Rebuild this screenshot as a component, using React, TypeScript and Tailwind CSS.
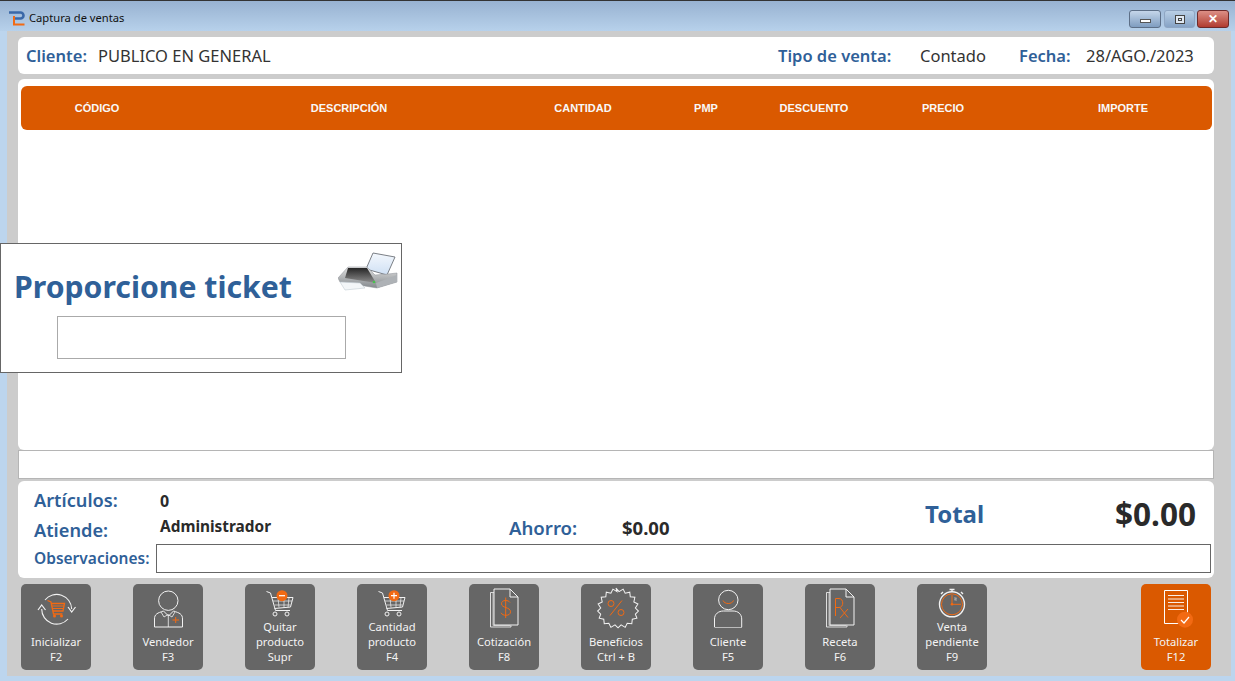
import React from "react";

const W = "#f2f2f2";
const O = "#f26a13";

const Cart = ({ plus }: { plus: boolean }) => (
  <g fill="none">
    <path d="M21.500 7.500l4 1.500 5 17.500h14.500M27 13.500H48l-2.500 9.500-16 1.500" stroke={W} strokeWidth="1" />
    <path d="M28 17h19M29.500 21h16M33 13.500l1 10M39 13.500v10M44 13.500l-1 10" stroke={W} strokeWidth=".7" />
    <circle cx="30" cy="30" r="2" stroke={W} />
    <circle cx="42" cy="30" r="2" stroke={W} />
    <circle cx="37" cy="11.700" r="5.500" fill={O} />
    <path d={plus ? "M34 11.700h6M37 8.700v6" : "M34 11.700h6"} stroke="#fff" strokeWidth="1.200" />
  </g>
);

const Doc = ({ children }: { children: React.ReactNode }) => (
  <g fill="none">
    <path d="M25 8.500H21.500V43H42V41.500" stroke={W} strokeWidth="1" opacity=".85" />
    <path d="M24 8.500V41.500H41.500" stroke="#bbb" strokeWidth="1" />
    <path d="M25 5H41L49 13V41H25Z M41 5V13H49" stroke={W} strokeWidth="1" />
    {children}
  </g>
);

const icons: Record<string, React.ReactNode> = {
  init: (
    <g fill="none">
      <path d="M24 16A15 15 0 0 1 50.700 25M47 35A15 15 0 0 1 20.700 25" stroke={W} strokeWidth="1.100" />
      <path d="M17 26l3.700-5 3.800 5M47 23l3.700 5 3.800-5" stroke={W} strokeWidth="1.200" />
      <path d="M26.500 16.500l3.500 1.500 2.500 12h9M30.500 19.500H43.500l-1.500 7.500H32" stroke={O} strokeWidth="1.300" />
      <path d="M31 22h12M32 24.500h10" stroke={O} strokeWidth="1" />
      <circle cx="33.500" cy="32" r="1.500" fill={O} />
      <circle cx="40.500" cy="32" r="1.500" fill={O} />
    </g>
  ),
  vend: (
    <g fill="none" stroke={W}>
      <circle cx="35.300" cy="16.700" r="9.700" />
      <path d="M21.500 43V35c0-5 3-6 9-8l5 5 5-5c6 2 9 3 9 8v8Z" strokeWidth="1" />
      <path d="M28 28l3 5 4-2.500 4 2.500 3-5M35.300 31V43" strokeWidth=".8" />
      <path d="M39.500 36h6.500M42.700 33v6" stroke={O} strokeWidth="1" />
    </g>
  ),
  quitar: <Cart plus={false} />,
  cant: <Cart plus={true} />,
  coti: (
    <Doc>
      <path d="M41 18.500c-1-1.500-2.500-2-4.500-2-2.500 0-4 1.200-4 3.300 0 4.500 9 3 9 8 0 2.300-2 3.500-4.500 3.500-2.300 0-4-.8-5-2.500M36.700 13.500V34" stroke={O} strokeWidth="1" />
    </Doc>
  ),
  benef: (
    <g fill="none">
      <path
        d="M35 5l3 3.500 4-2.500 2 4 4.500-1 .5 4.500 4.500.5-1 4.500 4 2-2.500 4 3 3-3 3 1.500 4-4.500 1-.5 4.500-4.500-.500-2 4-4-2.500-3 3-3-3-4 2.500-2-4-4.500.5-.5-4.500-4.500-1 1.500-4-3-3 3-3-2.500-4 4-2-1-4.500 4.500-.5.5-4.500 4.500 1 2-4 4 2.500Z"
        stroke={W}
        strokeWidth="1"
        transform="translate(35 24) scale(1.020) translate(-35 -24.500)"
      />
      <circle cx="30" cy="19.500" r="3" stroke={O} />
      <circle cx="40" cy="28.500" r="3" stroke={O} />
      <path d="M41 16.500L29 31.500" stroke={O} />
    </g>
  ),
  cli: (
    <g fill="none" stroke={W}>
      <circle cx="35.300" cy="16" r="9.700" />
      <path d="M30 16.500c1.500 4 9 4 10.500 0" stroke={O} />
      <path d="M21.500 43V35c0-5 4-8 9-8h9.500c5 0 8.700 3 8.700 8v8" />
      <path d="M21.500 43.500H49" stroke="#bbb" />
    </g>
  ),
  rec: (
    <Doc>
      <path d="M30.500 32V14.500h3.500c5 0 5 9 0 9H30.500M35 23.500l8 10M43 25l-8 9" stroke={O} strokeWidth="1" />
    </Doc>
  ),
  venta: (
    <g fill="none">
      <circle cx="35" cy="20.300" r="12.500" stroke={W} strokeWidth="1.400" />
      <circle cx="35" cy="20.300" r="10.500" stroke={O} strokeWidth="1" />
      <path d="M32.500 5.500h5M35 5.500v2.500M26 8l-2 2M44 8l2 2" stroke={W} strokeWidth="1.400" />
      <path d="M35 11v9.300h9" stroke={O} strokeWidth="1" />
      <circle cx="35" cy="20.300" r="1.300" fill={O} />
      <path d="M37 14h2.500l-2 2h2.500" stroke={W} strokeWidth=".5" />
    </g>
  ),
  total: (
    <g fill="none">
      <path d="M23.500 6.500H46.500V32M38 39.500H23.500V6.500" stroke="#fff" strokeWidth="1" />
      <path d="M27 11.500H43M27 15H43M27 18.500H43M27 22H43M27 25.500H43" stroke="#fff" strokeWidth=".9" />
      <circle cx="44" cy="35.700" r="8" fill={O} />
      <path d="M40 36l3 3 5-6" stroke="#fff" strokeWidth="1.200" />
    </g>
  ),
};

const Btn = ({ icon, lines, accent }: { icon: string; lines: string[]; accent?: boolean }) => (
  <div
    className={`flex h-[86px] w-[70px] flex-col items-center rounded-[5px] text-[11.200px] leading-[15px] text-[#f4f4f4] ${
      accent ? "bg-[#da5900]" : "bg-[#666666]"
    }`}
  >
    <svg viewBox={lines.length === 3 ? "0 0 70 35" : "0 0 70 50"} className={`w-[70px] shrink-0 ${lines.length === 3 ? "h-[35px]" : "h-[50px]"}`}>
      {icons[icon]}
    </svg>
    {lines.map((l) => (
      <div key={l} className="whitespace-nowrap text-center">
        {l}
      </div>
    ))}
  </div>
);

const buttons = [
  { icon: "init", lines: ["Inicializar", "F2"] },
  { icon: "vend", lines: ["Vendedor", "F3"] },
  { icon: "quitar", lines: ["Quitar", "producto", "Supr"] },
  { icon: "cant", lines: ["Cantidad", "producto", "F4"] },
  { icon: "coti", lines: ["Cotización", "F8"] },
  { icon: "benef", lines: ["Beneficios", "Ctrl + B"] },
  { icon: "cli", lines: ["Cliente", "F5"] },
  { icon: "rec", lines: ["Receta", "F6"] },
  { icon: "venta", lines: ["Venta", "pendiente", "F9"] },
];

const Printer = () => (
  <svg viewBox="0 0 60 44" className="h-[44px] w-[60px]">
    <defs>
      <linearGradient id="pbody" x1="0" y1="0" x2="0" y2="1">
        <stop offset="0" stopColor="#e0e0e0" />
        <stop offset="1" stopColor="#84898d" />
      </linearGradient>
      <linearGradient id="pin" x1="0" y1="0" x2="0" y2="1">
        <stop offset="0" stopColor="#262626" />
        <stop offset="1" stopColor="#8f8f8f" />
      </linearGradient>
      <linearGradient id="ppaper" x1="0" y1="0" x2="0" y2="1">
        <stop offset="0" stopColor="#f4f8fd" />
        <stop offset="1" stopColor="#cfe0f4" />
      </linearGradient>
    </defs>
    <path d="M35 3L57 7 49 25 28 19Z" fill="url(#ppaper)" stroke="#6d7278" strokeWidth=".9" />
    <path d="M0 28L10 17H29L37 25 50 24 59 23V32L39 38 2 32Z" fill="url(#pbody)" stroke="#8a8f94" strokeWidth=".5" />
    <path d="M10 18H29L38 33 7 28Z" fill="url(#pin)" />
    <path d="M38 33L39 38 59 32V25Z" fill="#aeb2b6" />
    <path d="M2 32L22 33 27 38 7 40Z" fill="#f3f6f8" stroke="#c3ccd3" strokeWidth=".6" />
    <circle cx="36" cy="32" r="1.300" fill="#46c24d" />
  </svg>
);

const font = { fontFamily: '"Noto Sans", "Open Sans", sans-serif' };

export default function App() {
  return (
    <div style={font} className="relative h-[681px] w-[1235px] overflow-hidden border-t border-[#333] bg-[#bcd5ee]">
      <div className="flex h-[30px] items-start justify-between bg-gradient-to-b from-[#98b2d1] to-[#b7d1eb] pl-[9px] pr-[6px] pt-[9px]">
        <div className="flex items-center gap-[5px]">
          <svg viewBox="0 0 16 15" className="h-[15px] w-[16px]">
            <path d="M0 1.500h11.500a3 3 0 0 1 0 6H4.500" fill="none" stroke="#3a68a8" strokeWidth="2.600" />
            <path d="M5 5V13.500H15.500" fill="none" stroke="#f26a13" strokeWidth="2" />
          </svg>
          <span className="-ml-[1px] text-[11.200px] text-[#111]">Captura de ventas</span>
        </div>
        <div className="flex h-[18px] items-start">
          <div className="mr-[3px] flex h-[18px] w-[32px] items-center justify-center rounded-[3px] border border-[#5d6f87] bg-gradient-to-b from-[#c5d6ea] to-[#7f9dc0]">
            <div className="mt-[3px] h-[4px] w-[11px] border border-[#555] bg-white" />
          </div>
          <div className="mr-[2px] flex h-[18px] w-[31px] items-center justify-center rounded-[3px] border border-[#8fa6c3] bg-gradient-to-b from-[#b9cfe6] to-[#86a3c6]">
            <div className="flex h-[9px] w-[10px] items-center justify-center border border-[#444] bg-[#dfe8f2]">
              <div className="h-[3px] w-[4px] border border-[#444]" />
            </div>
          </div>
          <div className="flex h-[18px] w-[32px] items-center justify-center rounded-[3px] border border-[#6d2a2a] bg-gradient-to-b from-[#dc8f86] to-[#b03a30] text-[12px] font-black leading-none text-white">
            ✕
          </div>
        </div>
      </div>

      <div className="mx-[7px] h-[645px] w-[1224px] bg-[#cccccc] px-[11px] pt-[6px]">
        <div className="flex h-[37px] w-[1196px] items-center rounded-[6px] bg-white pl-[8px] pt-[1px] text-[16.500px] text-[#333]">
          <span className="w-[72px] font-semibold text-[#2f6098]">Cliente:</span>
          <span className="w-[680px]">PUBLICO EN GENERAL</span>
          <span className="w-[142px] font-semibold text-[#2f6098]">Tipo de venta:</span>
          <span className="w-[99px]">Contado</span>
          <span className="w-[67px] font-semibold text-[#2f6098]">Fecha:</span>
          <span>28/AGO./2023</span>
        </div>

        <div className="mt-[5px] h-[371px] w-[1196px] rounded-[6px] bg-white pl-[3px] pt-[7px]">
          <div
            style={{ fontFamily: '"Liberation Sans", Arial, sans-serif' }}
            className="grid h-[44px] w-[1191px] grid-cols-[152px_352px_116px_130px_86px_172px_183px] items-center rounded-[6px] bg-[#da5900] text-center text-[11px] font-bold text-[#f8f8f8]"
          >
            <span>CÓDIGO</span>
            <span>DESCRIPCIÓN</span>
            <span>CANTIDAD</span>
            <span>PMP</span>
            <span>DESCUENTO</span>
            <span>PRECIO</span>
            <span className="pl-[5px]">IMPORTE</span>
          </div>
        </div>

        <div className="h-[29px] w-[1196px] border border-[#b5b5b5] bg-white" />

        <div className="mt-[2px] h-[97px] w-[1196px] rounded-[6px] bg-white pl-[16px] pr-[3px] pt-[6px]">
          <div className="grid h-[57px] grid-cols-[126px_349px_113px_303px_1fr] grid-rows-[27px_30px] items-center text-[#2a2a2a]">
            <span className="text-[18.200px] font-semibold text-[#2f6098]">Artículos:</span>
            <span className="text-[16px] font-bold">0</span>
            <span className="col-start-1 row-start-2 mt-[3px] text-[18.200px] font-semibold text-[#2f6098]">Atiende:</span>
            <span className="col-start-2 row-start-2 -mt-[4px] text-[15.400px] font-bold">Administrador</span>
            <span className="col-start-3 row-start-2 -mt-[2px] text-[18.600px] font-semibold text-[#2f6098]">Ahorro:</span>
            <span className="col-start-4 row-start-2 -mt-[2px] text-[18.500px] font-bold">$0.00</span>
            <span className="col-start-5 row-span-2 row-start-1 -mt-[4px] flex items-center justify-between pr-[15px]">
              <span className="text-[24px] font-bold text-[#2f6098]">Total</span>
              <span className="text-[31.500px] font-bold leading-none">$0.00</span>
            </span>
          </div>
          <div className="flex h-[29px] items-center">
            <span className="w-[122px] text-[15.500px] font-semibold text-[#2f6098]">Observaciones:</span>
            <div className="h-[29px] w-[1055px] border border-[#666] bg-white" />
          </div>
        </div>

        <div className="mt-[6px] flex w-[1193px] pl-[3px]">
          <div className="flex gap-[42px]">
            {buttons.map((b) => (
              <Btn key={b.icon} icon={b.icon} lines={b.lines} />
            ))}
          </div>
          <div className="ml-auto">
            <Btn icon="total" lines={["Totalizar", "F12"]} accent />
          </div>
        </div>
      </div>

      <div className="absolute left-0 top-[242px] h-[130px] w-[402px] border border-[#666] bg-white">
        <div className="absolute left-[13px] top-[21px] text-[30.200px] font-bold leading-[44px] text-[#2f6098]">Proporcione ticket</div>
        <div className="absolute left-[337px] top-[6px]">
          <Printer />
        </div>
        <div className="absolute left-[56px] top-[72px] h-[43px] w-[289px] border border-[#aaa] bg-white" />
      </div>
    </div>
  );
}
